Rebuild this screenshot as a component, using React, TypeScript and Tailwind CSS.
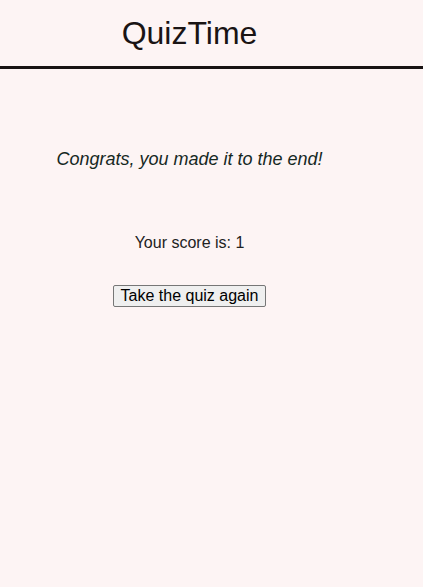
import React from 'react';

function App() {
  const score = 1;

  return (
    <div className="min-h-screen bg-[#fdf4f4] font-['Liberation_Sans',Arial,sans-serif]">
      <header className="h-[69px] border-b-[3px] border-[#181212]">
        <div className="w-[379px] h-full flex items-center justify-center">
          <h1 className="text-[32px] leading-[36px] text-[#1a1414]">QuizTime</h1>
        </div>
      </header>

      <main className="w-[379px] flex flex-col items-center">
        <p className="mt-[78px] text-[18px] leading-[24px] italic text-[#16281f]">
          Congrats, you made it to the end!
        </p>
        <p className="mt-[60px] text-[16px] leading-[24px] text-[#222]">
          Your score is: {score}
        </p>
        <button className="mt-[30px] px-[7px] py-[1px] text-[16px] leading-[18px] text-black bg-[#efefef] border border-[#767676] rounded-[2px]">
          Take the quiz again
        </button>
      </main>
    </div>
  );
}

export default App;
